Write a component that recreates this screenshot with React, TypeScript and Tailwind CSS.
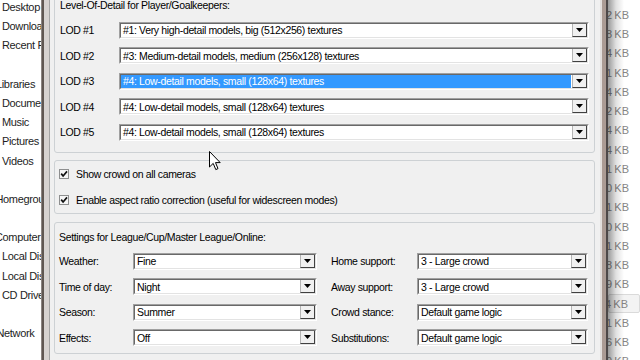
import React from 'react';

const sidebarItems: { label: string; shift?: string }[] = [
  { label: 'Desktop' },
  { label: 'Downloads' },
  { label: 'Recent Places' },
  { label: '' },
  { label: 'Libraries', shift: 'ml-[-6px]' },
  { label: 'Documents' },
  { label: 'Music' },
  { label: 'Pictures' },
  { label: 'Videos' },
  { label: '' },
  { label: 'Homegroup', shift: 'ml-[-6.5px]' },
  { label: '' },
  { label: 'Computer', shift: 'ml-[-7px]' },
  { label: 'Local Disk (C:)' },
  { label: 'Local Disk (D:)' },
  { label: 'CD Drive (E:)' },
  { label: '' },
  { label: 'Network', shift: 'ml-[-5.5px]' },
  { label: '' },
];

const sizes = ['12', '18', '24', '31', '64', '22', '14', '44', '11', '10', '51', '20', '31', '18', '39', '14', '21', '16', '9'];

const lodRows = [
  { label: 'LOD #1', value: '#1: Very high-detail models, big (512x256) textures' },
  { label: 'LOD #2', value: '#3: Medium-detail models, medium (256x128) textures' },
  { label: 'LOD #3', value: '#4: Low-detail models, small (128x64) textures', selected: true },
  { label: 'LOD #4', value: '#4: Low-detail models, small (128x64) textures' },
  { label: 'LOD #5', value: '#4: Low-detail models, small (128x64) textures' },
];

const leagueRows = [
  { left: 'Weather:', leftValue: 'Fine', right: 'Home support:', rightValue: '3 - Large crowd' },
  { left: 'Time of day:', leftValue: 'Night', right: 'Away support:', rightValue: '3 - Large crowd' },
  { left: 'Season:', leftValue: 'Summer', right: 'Crowd stance:', rightValue: 'Default game logic' },
  { left: 'Effects:', leftValue: 'Off', right: 'Substitutions:', rightValue: 'Default game logic' },
];

function Combo({ value, selected, className }: { value: string; selected?: boolean; className?: string }) {
  return (
    <div
      className={`flex h-[17px] border border-t-[#a0a0a0] border-l-[#a0a0a0] border-b-white border-r-white ${className ?? ''}`}
    >
      <div className="flex min-w-0 flex-1 border border-t-[#696969] border-l-[#696969] border-b-[#e3e3e3] border-r-[#e3e3e3] bg-white">
        <div className="flex min-w-0 flex-1 items-center pr-[1px]">
          <div
            className={`flex h-full flex-1 items-center overflow-hidden whitespace-nowrap pl-[2px] ${
              selected ? 'bg-[#3399ff] text-white' : 'text-black'
            }`}
          >
            {value}
          </div>
        </div>
        <div className="flex w-[15px] items-center justify-center border-l border-l-[#b4b4b4] border-r border-r-[#404040] border-b border-b-[#404040] bg-[#f0f0f0]">
          <svg width="7" height="4" viewBox="0 0 7 4">
            <polygon points="0,0 7,0 3.5,4" fill="#000" />
          </svg>
        </div>
      </div>
    </div>
  );
}

function Checkbox({ label }: { label: string }) {
  return (
    <div className="flex h-[14px] items-center">
      <svg width="10" height="10" viewBox="0 0 10 10" className="shrink-0">
        <rect x="0.5" y="0.5" width="9" height="9" fill="#f6f6f6" stroke="#8e8f8f" />
        <path d="M2.2 4.6 L4.1 7 L8 2.4" fill="none" stroke="#111" strokeWidth="1.7" />
      </svg>
      <span className="ml-[7px] whitespace-nowrap text-black">{label}</span>
    </div>
  );
}

export default function App() {
  return (
    <div className="relative flex h-[360px] w-[640px] overflow-hidden bg-white font-['Liberation_Sans',Arial,sans-serif] text-[10.5px] leading-[14px] tracking-[-0.35px]">
      {/* explorer navigation pane, clipped by the dialog */}
      <div className="flex w-[41px] shrink-0 flex-col overflow-hidden text-[11px] text-[#1d1d1d]">
        <div className="mt-[-2.6px] flex flex-col">
          {sidebarItems.map((item, i) => (
            <div key={i} className="flex h-[19.2px] items-center whitespace-nowrap pl-[2px]">
              <span className={item.shift ?? ''}>{item.label}</span>
            </div>
          ))}
        </div>
      </div>

      {/* left window frame */}
      <div className="flex w-[9px] shrink-0">
        <div className="w-[1px] bg-[#8c8582]" />
        <div className="w-[2px] bg-[#5f5752]" />
        <div className="w-[5px] bg-[#d6d2d0]" />
        <div className="w-[1px] bg-[#a3a3a3]" />
      </div>

      {/* dialog */}
      <div className="flex w-[550px] shrink-0 flex-col bg-[#f0f0f0] pl-[4px] pr-[5px] text-black">
        <div className="mt-[-9px] flex h-[162px] flex-col rounded-[3px] border border-[#cdd1d4] px-[5px] pt-[6px]">
          <div className="whitespace-nowrap">Level-Of-Detail for Player/Goalkeepers:</div>
          <div className="mt-[9.5px] flex flex-col gap-[8.5px]">
            {lodRows.map((row) => (
              <div key={row.label} className="flex items-center">
                <div className="w-[59px] shrink-0">{row.label}</div>
                <Combo value={row.value} selected={row.selected} className="flex-1" />
              </div>
            ))}
          </div>
        </div>

        <div className="mt-[7px] flex h-[54px] flex-col gap-[11.5px] rounded-[3px] border border-[#cdd1d4] pl-[4px] pt-[6px]">
          <Checkbox label="Show crowd on all cameras" />
          <Checkbox label="Enable aspect ratio correction (useful for widescreen modes)" />
        </div>

        <div className="mt-[8px] flex h-[132px] flex-col rounded-[3px] border border-[#cdd1d4] pl-[4px] pr-[6px] pt-[6.7px]">
          <div className="whitespace-nowrap">Settings for League/Cup/Master League/Online:</div>
          <div className="mt-[9px] flex flex-col gap-[8.5px]">
            {leagueRows.map((row) => (
              <div key={row.left} className="flex items-center">
                <div className="w-[74px] shrink-0 whitespace-nowrap">{row.left}</div>
                <Combo value={row.leftValue} className="w-[184px] shrink-0" />
                <div className="ml-[14px] w-[86px] shrink-0 whitespace-nowrap">{row.right}</div>
                <Combo value={row.rightValue} className="flex-1" />
              </div>
            ))}
          </div>
        </div>
      </div>

      {/* right window frame */}
      <div className="flex w-[8px] shrink-0">
        <div className="w-[2px] bg-[#e2dedc]" />
        <div className="w-[4px] bg-[#ab9b94]" />
        <div className="w-[2px] bg-[#4d4848]" />
      </div>

      {/* file list behind the dialog */}
      <div className="relative w-[32px] shrink-0 overflow-hidden text-[11px] tracking-normal text-[#858585]">
        <div className="flex flex-col pt-[5.4px]">
          {sizes.map((s, i) => (
            <div
              key={i}
              className={`flex h-[19.24px] items-center justify-end whitespace-nowrap pr-[11px] ${
                i === 15 ? 'rounded-[2px] border border-[#dadada] bg-[#f3f3f3]' : ''
              }`}
            >
              {s}&thinsp;KB
            </div>
          ))}
        </div>
        <div className="absolute inset-y-0 left-0 w-[16px] bg-linear-to-r from-black/40 via-black/12 to-transparent" />
      </div>

      {/* mouse pointer */}
      <svg className="absolute left-[209px] top-[151px]" width="12" height="20" viewBox="0 0 12 20">
        <path d="M0.5 0.5 L0.5 16 L4.2 12.4 L6.8 18.6 L9 17.6 L6.5 11.6 L11.2 11.6 Z" fill="#fff" stroke="#000" strokeWidth="1" strokeLinejoin="round" />
      </svg>
    </div>
  );
}
